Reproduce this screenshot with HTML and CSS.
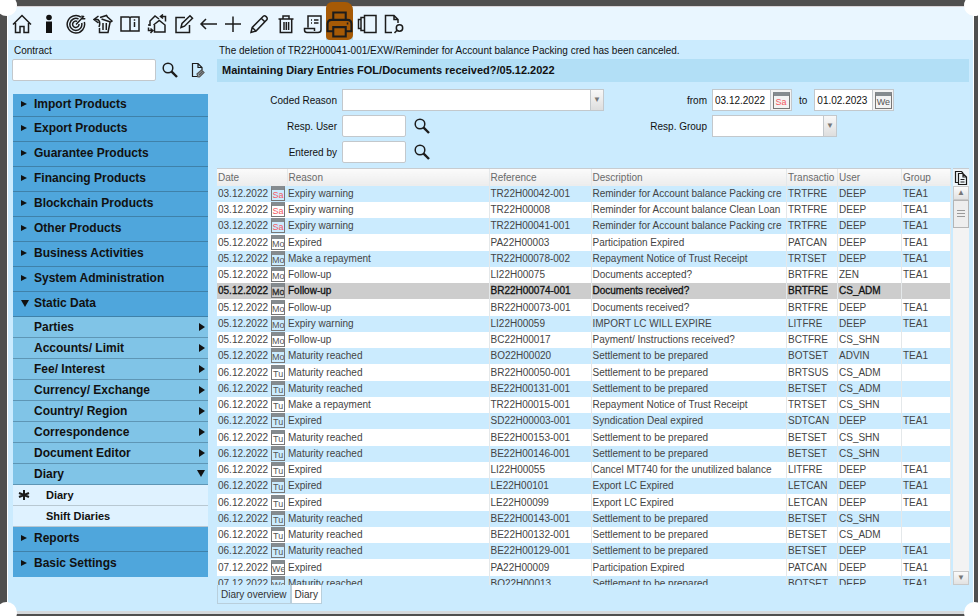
FILE: index.html
```html
<!DOCTYPE html>
<html lang="en">
<head>
    <meta charset="UTF-8">
    <meta name="viewport" content="width=device-width, initial-scale=1.0">
    <title>Diary</title>
    <link rel="stylesheet" href="styles.css">
</head>
<body>
    <svg class="symbols" aria-hidden="true">
        <symbol id="search" viewBox="0 0 16 16"><circle cx="6" cy="6" r="4.8"/><path d="M9.4 9.4L15 15" stroke-width="2.4"/></symbol>
    </svg>

    <div class="window">
        <span class="corner top-left"></span>
        <span class="corner top-right"></span>
        <span class="corner bottom-left"></span>
        <span class="corner bottom-right"></span>

        <header class="toolbar">
            <button aria-label="Home"><svg viewBox="0 0 20 20"><path d="M1 10.5L10 1.5l9 9M3.5 9v9.5h4.5v-6h4v6h4.500V9"/></svg></button>
            <button aria-label="Info"><svg viewBox="0 0 20 20"><path class="solid" d="M7 7.500h6V19H7z"/><circle class="solid" cx="10" cy="3.500" r="2.800"/></svg></button>
            <button aria-label="Target"><svg viewBox="0 0 20 20"><path d="M15 3.2A8.7 8.7 0 1 0 18.3 8M12.5 5A6 6 0 1 0 15.7 9M11.2 7.4A3.2 3.2 0 1 0 13 10"/><path d="M10 10.5l8-8.5M16 1.5l.3 3 3 .3"/></svg></button>
            <button aria-label="Restore"><svg viewBox="0 0 20 20"><path d="M5.500 2L1 5.500 5.500 9M1.500 5.500C7 4.500 7.500 9 6 13M7 3.500L13.500 1.500 14.500 3l4.500 4-2 1.500M8.500 5l9 3M6.500 14v4.500H15L17 8.500M10 9v7M13.300 9v7"/></svg></button>
            <button aria-label="Manual"><svg viewBox="0 0 20 20"><path d="M1 3h8l1 1 1-1h8v14H1zM10 4v13.500"/><path d="M14.500 8v5M14.500 5.200v1.500"/></svg></button>
            <button aria-label="Switch entity"><svg viewBox="0 0 20 20"><path d="M6.500 11l5.800-4.500L18 11v7H7.500v-7M3 12V7l5-5 4 3M3 11H1M14 2.500h4.500v5M16 .5l-2.500 2L16 4.500M5 16.500H1.500v-3M3.500 14.500l2.300 2-2.300 2.500"/></svg></button>
            <button aria-label="Edit"><svg viewBox="0 0 20 20"><path d="M11 3.500H2v15h13.500V11M7 13.500l1-4L16 1.800l2.500 2.400-8 8z"/></svg></button>
            <button class="narrow" aria-label="Back"><svg viewBox="0 0 20 20"><path d="M18 10H2M7 5l-5 5 5 5"/></svg></button>
            <button class="narrow" aria-label="Add"><svg viewBox="0 0 20 20"><path d="M10 2.500V18M2 10h16"/></svg></button>
            <button aria-label="Modify"><svg viewBox="0 0 20 20"><path d="M2 18.500l1.200-5L14.500 2c1.500-1 4.500 1.500 3.500 3.500L7 17zM12.500 4.500l3 3M3.200 13.500L7 17"/></svg></button>
            <button aria-label="Delete"><svg viewBox="0 0 20 20"><path d="M2.500 5h15M7 5V2h6v3M4.300 5v13.500h11.400V5M8 8v8M10.300 8v8M12.600 8v8"/></svg></button>
            <button aria-label="Log"><svg viewBox="0 0 20 20"><path d="M5 13.500V2h13v14c0 2-1.500 2.500-3 2.500H4c-1.500 0-2.500-1-2.500-2.500v-1.500h10V17M8 6h1M11 6h4.500M8 9h1M11 9h4.500"/></svg></button>
            <button class="print" aria-label="Print"><svg viewBox="0 0 26 26"><path d="M7 9V2h12v7M7 20H1.500V13c0-2.500 1.500-4 4-4h15c2.500 0 4 1.500 4 4v7H19M7 16h12v9H7zM20 12.500h1.500"/></svg></button>
            <button aria-label="Panels"><svg viewBox="0 0 20 20"><path d="M7.500 1.500H19v17H7.500zM7.500 3.500H4v13h3.500M4 5.500H1.500v9H4"/></svg></button>
            <button aria-label="Document search"><svg viewBox="0 0 20 20"><path d="M8 18.500H1.500v-17h8.500l4 4V9M10 1.500v4h4"/><circle cx="15.500" cy="14" r="3.200"/><path d="M13 16.300L10.500 19"/></svg></button>
        </header>

        <div class="content">
            <aside class="side">
                <label class="caption" for="contract">Contract</label>
                <div class="contract">
                    <input type="text" id="contract">
                    <button class="icon" aria-label="Search contract"><svg><use href="#search"/></svg></button>
                    <button class="icon" aria-label="Attachment"><svg class="thin" viewBox="0 0 16 16"><path d="M8 14.500H2.500v-13H8L12 5.500V8M8 1.500v4h4"/><path class="clip" d="M7 12l4.500-4 2.500 2.500-4.500 4.500H8zM9 13l3.500-3.500"/></svg></button>
                </div>

                <nav class="menu">
                    <a class="item" href="#"><span class="arrow"></span>Import Products</a>
                    <a class="item" href="#"><span class="arrow"></span>Export Products</a>
                    <a class="item" href="#"><span class="arrow"></span>Guarantee Products</a>
                    <a class="item" href="#"><span class="arrow"></span>Financing Products</a>
                    <a class="item" href="#"><span class="arrow"></span>Blockchain Products</a>
                    <a class="item" href="#"><span class="arrow"></span>Other Products</a>
                    <a class="item" href="#"><span class="arrow"></span>Business Activities</a>
                    <a class="item" href="#"><span class="arrow"></span>System Administration</a>
                    <a class="item" href="#"><span class="arrow down"></span>Static Data</a>
                    <a class="sub" href="#">Parties<span class="arrow"></span></a>
                    <a class="sub" href="#">Accounts/ Limit<span class="arrow"></span></a>
                    <a class="sub" href="#">Fee/ Interest<span class="arrow"></span></a>
                    <a class="sub" href="#">Currency/ Exchange<span class="arrow"></span></a>
                    <a class="sub" href="#">Country/ Region<span class="arrow"></span></a>
                    <a class="sub" href="#">Correspondence<span class="arrow"></span></a>
                    <a class="sub" href="#">Document Editor<span class="arrow"></span></a>
                    <a class="sub" href="#">Diary<span class="arrow down"></span></a>
                    <a class="leaf" href="#"><svg class="star" viewBox="0 0 12 12"><path d="M6 1v10M1 4l10 4M11 4L1 8"/></svg>Diary</a>
                    <a class="leaf" href="#">Shift Diaries</a>
                    <a class="item" href="#"><span class="arrow"></span>Reports</a>
                    <a class="item" href="#"><span class="arrow"></span>Basic Settings</a>
                </nav>
            </aside>

            <main class="main">
                <p class="caption">The deletion of TR22H00041-001/EXW/Reminder for Account balance Packing cred has been canceled.</p>
                <h1 class="title">Maintaining Diary Entries FOL/Documents received?/05.12.2022</h1>

                <form class="filter">
                    <label for="reason">Coded Reason</label>
                    <div class="select"><select id="reason"><option></option></select></div>
                    <label for="from">from</label>
                    <div class="dates">
                        <span class="date"><input type="text" id="from" value="03.12.2022"><button type="button" aria-label="Pick from date"><span class="cal red">Sa</span></button></span>
                        <label for="to">to</label>
                        <span class="date"><input type="text" id="to" value="01.02.2023"><button type="button" aria-label="Pick to date"><span class="cal">We</span></button></span>
                    </div>

                    <label for="user">Resp. User</label>
                    <div class="lookup"><input type="text" id="user"><button type="button" class="icon" aria-label="Search user"><svg><use href="#search"/></svg></button></div>
                    <label for="group">Resp. Group</label>
                    <div class="select group"><select id="group"><option></option></select></div>

                    <label for="entered">Entered by</label>
                    <div class="lookup"><input type="text" id="entered"><button type="button" class="icon" aria-label="Search entered by"><svg><use href="#search"/></svg></button></div>
                </form>

                <div class="grid">
                    <div class="rows">
                        <table>
                            <colgroup>
                                <col class="c-date"><col class="c-reason"><col class="c-ref"><col><col class="c-trans"><col class="c-user"><col class="c-group">
                            </colgroup>
                            <thead>
                                <tr><th>Date</th><th>Reason</th><th>Reference</th><th>Description</th><th>Transactio</th><th>User</th><th>Group</th></tr>
                            </thead>
                            <tbody id="entries"></tbody>
                        </table>
                    </div>
                    <div class="scroll">
                        <button class="copy" aria-label="Copy"><svg viewBox="0 0 14 16"><path d="M4 12.500H1.500v-11h6L9 3M4.500 3.500H9l3.500 3.500v7.500h-8zM9 3.500V7h3.500M6.500 9.500h4M6.500 12h4"/></svg></button>
                        <button class="step up" aria-label="Scroll up"></button>
                        <div class="thumb"></div>
                        <button class="step end" aria-label="Scroll down"></button>
                    </div>
                </div>

                <div class="tabs">
                    <button>Diary overview</button>
                    <button class="active">Diary</button>
                </div>
            </main>
        </div>
    </div>

    <script src="script.js"></script>
</body>
</html>
```

FILE: styles.css
```css
* {
    box-sizing: border-box;
}

body {
    display: flex;
    height: 100vh;
    margin: 0;
    padding: 6px 4px 2px 7px;
    overflow: hidden;
    background-color: #4f4f4f;
    font-family: "Liberation Sans", Arial, sans-serif;
    font-size: 10px;
    color: #111;
}

button, input, select {
    font: inherit;
    color: inherit;
    margin: 0;
    padding: 0;
}

button {
    border: none;
    background: none;
    cursor: pointer;
}

svg {
    fill: none;
    stroke: #1c1c1c;
    stroke-width: 1.5;
}

.symbols {
    position: absolute;
    width: 0;
    height: 0;
}

/* window frame */
.window {
    position: relative;
    display: flex;
    flex-direction: column;
    flex: 1;
    min-width: 0;
    border: 1px solid #fff;
    border-top-color: #d8d4d8;
    border-bottom: 3px solid #d5d9dc;
    background-color: #cbebfe;
}

.corner {
    position: absolute;
    z-index: 2;
    width: 21px;
    height: 21px;
    border-radius: 50%;
    background-color: #fff;
}

.top-left {
    left: -12px;
    top: -12px;
}

.top-right {
    right: -12px;
    top: -12px;
}

.bottom-left {
    left: -12px;
    bottom: -12px;
}

.bottom-right {
    right: -12px;
    bottom: -12px;
}

/* toolbar */
.toolbar {
    display: flex;
    height: 33px;
    flex-shrink: 0;
    background-color: #e9f6ff;
}

.toolbar button {
    display: flex;
    justify-content: center;
    align-items: center;
    width: 27px;
}

.toolbar .narrow {
    width: 24px;
}

.toolbar svg {
    width: 20px;
    height: 20px;
}

.toolbar .solid {
    fill: #111;
    stroke: none;
}

.toolbar .print {
    position: relative;
    background-color: #b5dff7;
}

.print::before {
    content: "";
    position: absolute;
    inset: -5px 0 0 0;
    border-radius: 6px 8px 5px 4px;
    background-color: #a65a06;
}

.toolbar .print svg {
    position: relative;
    flex-shrink: 0;
    width: 27px;
    height: 28px;
    stroke-width: 2;
}

/* left side */
.content {
    display: flex;
    flex: 1;
    min-height: 0;
    gap: 9px;
    padding: 3px 4px 7px;
}

.side {
    width: 196px;
    flex-shrink: 0;
}

.caption {
    display: block;
    margin: 0;
    padding-left: 2px;
    line-height: 16px;
    white-space: nowrap;
}

.contract {
    display: flex;
    align-items: center;
    margin: 0 0 13px;
}

input {
    height: 22px;
    padding-left: 2px;
    border: 1px solid #c3c8cc;
    border-radius: 2px;
    background-color: #fff;
}

.contract input {
    flex: 1;
    min-width: 0;
}

.icon {
    width: 16px;
    height: 16px;
    margin-left: 6px;
}

.contract .icon + .icon {
    margin: 0 2px 0 12px;
}

.icon svg {
    display: block;
    width: 16px;
    height: 16px;
}

.icon .thin {
    stroke-width: 1.2;
}

.clip {
    stroke: #555;
    fill: #9aa6ad;
}

.menu {
    padding-left: 1px;
    font-size: 12px;
    font-weight: bold;
}

.menu a {
    display: flex;
    align-items: center;
    color: #111;
    text-decoration: none;
    border-bottom: 1px solid #3f81a9;
}

.menu .item {
    height: 25px;
    padding: 0 0 2px 8px;
    background-color: #4fa6dc;
}

.menu .item:first-child {
    height: 23px;
}

.menu .item:last-child {
    border-bottom-color: #4fa6dc;
}

.menu .sub {
    height: 21px;
    padding: 0 3px 1px 21px;
    justify-content: space-between;
    background-color: #80c4e7;
    border-bottom-color: #5e96b5;
}

.menu .leaf {
    position: relative;
    height: 21px;
    padding-left: 33px;
    font-size: 11px;
    background-color: #dff2ff;
    border-bottom-color: #b8c8d2;
}

.star {
    position: absolute;
    left: 5px;
    width: 12px;
    height: 12px;
    stroke-width: 2;
}

.arrow {
    width: 0;
    height: 0;
    border: 3px solid transparent;
    border-left: 6px solid #111;
    border-right: none;
}

.item .arrow {
    margin-right: 7px;
}

.sub .arrow {
    border-top-width: 4px;
    border-bottom-width: 4px;
}

.arrow.down {
    border: 4px solid transparent;
    border-top: 7px solid #111;
    border-bottom: none;
}

.item .arrow.down {
    margin-right: 5px;
}

/* right side */
.main {
    display: flex;
    flex-direction: column;
    flex: 1;
    min-width: 0;
}

.title {
    margin: 0 0 7px;
    padding-left: 5px;
    font-size: 11px;
    line-height: 23px;
    background-color: #b2dff6;
}

.filter {
    display: grid;
    grid-template-columns: 120px 262px 98px 1fr;
    grid-auto-rows: 22px;
    gap: 4px 5px;
    align-items: center;
    margin-bottom: 5px;
}

.filter > label {
    text-align: right;
}

.select {
    position: relative;
}

.select select {
    display: block;
    width: 100%;
    height: 22px;
    border: 1px solid #c3c8cc;
    border-radius: 0;
    background-color: #fff;
    appearance: none;
}

/* drop-down handle */
.select::after {
    content: "\25BC";
    position: absolute;
    right: 1px;
    top: 1px;
    width: 12px;
    height: 20px;
    border-left: 1px solid #c3c8cc;
    background: linear-gradient(#f8f8f8, #dedede);
    color: #777;
    font-size: 8px;
    line-height: 20px;
    text-align: center;
    pointer-events: none;
}

.select.group {
    width: 125px;
}

.dates, .date, .lookup {
    display: flex;
    align-items: center;
}

.dates {
    gap: 7px;
}

.date {
    width: 80px;
    height: 22px;
    border: 1px solid #c3c8cc;
    background-color: #f3f3f3;
}

.date input {
    width: 58px;
    height: 20px;
    border: none;
    border-right: 1px solid #c3c8cc;
    border-radius: 0;
}

.date button {
    flex: 1;
    display: flex;
    justify-content: center;
}

.lookup input {
    width: 64px;
}

.lookup .icon {
    margin-left: 8px;
}

/* little calendar with the weekday in it */
.cal {
    display: inline-block;
    width: 14px;
    height: 15px;
    border: 1px solid #777;
    border-top: 4px solid #858b8f;
    color: #555;
    font-size: 9px;
    line-height: 11px;
    text-align: center;
    overflow: hidden;
    vertical-align: top;
}

.cal.red {
    color: #f4585e;
}

.date .cal {
    width: 17px;
    height: 17px;
    line-height: 13px;
}

/* entries */
.grid {
    display: flex;
    flex: 1;
    min-height: 0;
    gap: 2px;
}

.rows {
    flex: 1;
    min-width: 0;
    overflow: hidden;
    border-top: 1px solid #c8ccd0;
}

table {
    width: 100%;
    table-layout: fixed;
    border-collapse: collapse;
}

.c-date {
    width: 70px;
}

.c-reason {
    width: 202px;
}

.c-ref {
    width: 102px;
}

.c-trans {
    width: 51px;
}

.c-user {
    width: 64px;
}

.c-group {
    width: 49px;
}

th, td {
    padding: 0 0 0 1px;
    overflow: hidden;
    text-align: left;
    white-space: nowrap;
    border-right: 1px solid #e4e8ea;
}

th {
    height: 17px;
    font-weight: normal;
    color: #6a6a6a;
    background: linear-gradient(#fbfbfb, #ececec);
}

td {
    height: 16px;
    line-height: 16px;
    color: #444;
    background-color: #fff;
}

tr:nth-child(4n) td {
    height: 17px;
}

tr:nth-child(odd) td {
    background-color: #cbebfe;
}

td:first-child {
    border-right: none;
}

td .cal {
    margin-left: 3px;
}

tbody .selected td {
    background-color: #cdcdcd;
    color: #111;
    -webkit-text-stroke: 0.3px #111;
}

.scroll {
    display: flex;
    flex-direction: column;
    width: 16px;
    background-color: #f3f3f3;
}

.copy {
    height: 18px;
    background-color: #eef4f8;
    border-top: 1px solid #c8ccd0;
}

.copy svg {
    display: block;
    width: 14px;
    height: 16px;
    margin: 1px 1px 0;
    stroke-width: 1.2;
}

.step {
    height: 14px;
    border: 1px solid #c9c9c9;
    background: linear-gradient(#fafafa, #e2e2e2);
    color: #777;
    font-size: 8px;
    line-height: 10px;
}

.step::before {
    content: "\25B2";
}

.step.end {
    margin-top: auto;
}

.step.end::before {
    content: "\25BC";
}

.thumb {
    height: 28px;
    padding: 9px 3px;
    border: 1px solid #b5b5b5;
    background: repeating-linear-gradient(#9a9a9a 0 1px, #eee 1px 3px) content-box, #eee;
}

.tabs {
    display: flex;
    height: 19px;
}

.tabs button {
    padding: 0 3px;
    border: 1px solid #b9cfdc;
    border-top: none;
    color: #333;
}

.tabs .active {
    background-color: #fff;
}
```

FILE: script.js
```js
const entries = [
    ['03.12.2022', 'Sa', 'Expiry warning', 'TR22H00042-001', 'Reminder for Account balance Packing cre', 'TRTFRE', 'DEEP', 'TEA1'],
    ['03.12.2022', 'Sa', 'Expiry warning', 'TR22H00008', 'Reminder for Account balance Clean Loan', 'TRTFRE', 'DEEP', 'TEA1'],
    ['03.12.2022', 'Sa', 'Expiry warning', 'TR22H00041-001', 'Reminder for Account balance Packing cre', 'TRTFRE', 'DEEP', 'TEA1'],
    ['05.12.2022', 'Mo', 'Expired', 'PA22H00003', 'Participation Expired', 'PATCAN', 'DEEP', 'TEA1'],
    ['05.12.2022', 'Mo', 'Make a repayment', 'TR22H00078-002', 'Repayment Notice of Trust Receipt', 'TRTSET', 'DEEP', 'TEA1'],
    ['05.12.2022', 'Mo', 'Follow-up', 'LI22H00075', 'Documents accepted?', 'BRTFRE', 'ZEN', 'TEA1'],
    ['05.12.2022', 'Mo', 'Follow-up', 'BR22H00074-001', 'Documents received?', 'BRTFRE', 'CS_ADM', ''],
    ['05.12.2022', 'Mo', 'Follow-up', 'BR22H00073-001', 'Documents received?', 'BRTFRE', 'DEEP', 'TEA1'],
    ['05.12.2022', 'Mo', 'Expiry warning', 'LI22H00059', 'IMPORT LC WILL EXPIRE', 'LITFRE', 'DEEP', 'TEA1'],
    ['05.12.2022', 'Mo', 'Follow-up', 'BC22H00017', 'Payment/ Instructions received?', 'BCTFRE', 'CS_SHN', ''],
    ['05.12.2022', 'Mo', 'Maturity reached', 'BO22H00020', 'Settlement to be prepared', 'BOTSET', 'ADVIN', 'TEA1'],
    ['06.12.2022', 'Tu', 'Maturity reached', 'BR22H00050-001', 'Settlement to be prepared', 'BRTSUS', 'CS_ADM', ''],
    ['06.12.2022', 'Tu', 'Maturity reached', 'BE22H00131-001', 'Settlement to be prepared', 'BETSET', 'CS_ADM', ''],
    ['06.12.2022', 'Tu', 'Make a repayment', 'TR22H00015-001', 'Repayment Notice of Trust Receipt', 'TRTSET', 'CS_SHN', ''],
    ['06.12.2022', 'Tu', 'Expired', 'SD22H00003-001', 'Syndication Deal expired', 'SDTCAN', 'DEEP', 'TEA1'],
    ['06.12.2022', 'Tu', 'Maturity reached', 'BE22H00153-001', 'Settlement to be prepared', 'BETSET', 'CS_SHN', ''],
    ['06.12.2022', 'Tu', 'Maturity reached', 'BE22H00146-001', 'Settlement to be prepared', 'BETSET', 'CS_SHN', ''],
    ['06.12.2022', 'Tu', 'Expired', 'LI22H00055', 'Cancel MT740 for the unutilized balance', 'LITFRE', 'DEEP', 'TEA1'],
    ['06.12.2022', 'Tu', 'Expired', 'LE22H00101', 'Export LC Expired', 'LETCAN', 'DEEP', 'TEA1'],
    ['06.12.2022', 'Tu', 'Expired', 'LE22H00099', 'Export LC Expired', 'LETCAN', 'DEEP', 'TEA1'],
    ['06.12.2022', 'Tu', 'Maturity reached', 'BE22H00143-001', 'Settlement to be prepared', 'BETSET', 'CS_SHN', ''],
    ['06.12.2022', 'Tu', 'Maturity reached', 'BE22H00132-001', 'Settlement to be prepared', 'BETSET', 'CS_ADM', ''],
    ['06.12.2022', 'Tu', 'Maturity reached', 'BE22H00129-001', 'Settlement to be prepared', 'BETSET', 'DEEP', 'TEA1'],
    ['07.12.2022', 'We', 'Expired', 'PA22H00009', 'Participation Expired', 'PATCAN', 'DEEP', 'TEA1'],
    ['07.12.2022', 'We', 'Maturity reached', 'BO22H00013', 'Settlement to be prepared', 'BOTSET', 'DEEP', 'TEA1']
];
const selected = 6;

const body = document.getElementById('entries');

entries.forEach(function(entry, index) {
    const [date, day, ...rest] = entry;
    const row = body.insertRow();
    if (index === selected) {
        row.className = 'selected';
    }

    const cal = document.createElement('span');
    cal.className = day === 'Sa' ? 'cal red' : 'cal';
    cal.textContent = day;
    row.insertCell().append(date, cal);

    rest.forEach(function(text) {
        row.insertCell().textContent = text;
    });
});
```
